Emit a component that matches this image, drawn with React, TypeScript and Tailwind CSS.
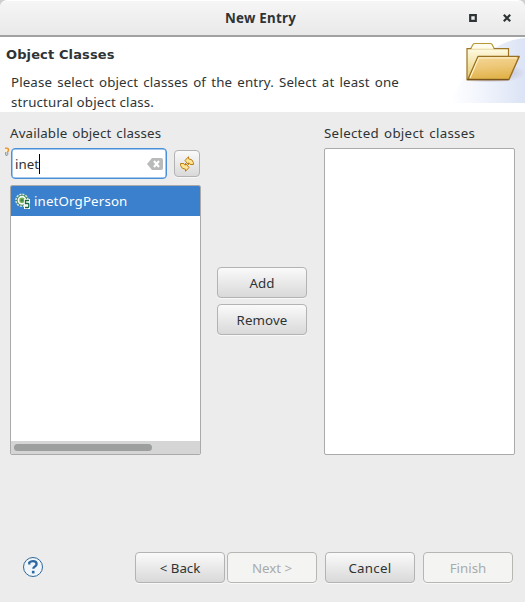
import type { ReactNode } from "react";

function Button({ children, disabled = false }: { children: ReactNode; disabled?: boolean }) {
  return (
    <button
      disabled={disabled}
      className={
        disabled
          ? "h-[31px] w-[90px] rounded-[4px] border border-[#b6b6b3] bg-[#f4f4f2] shadow-[0_1px_#f8f8f8] text-[#a8abac]"
          : "h-[31px] w-[90px] rounded-[4px] border border-[#b3b3b3] bg-linear-to-b from-[#fafafa] to-[#d9d9d9] shadow-[0_1px_#f8f8f8] text-[#2e3436]"
      }
    >
      {children}
    </button>
  );
}

function TitleBar() {
  return (
    <div className="bg-[#cfcfcf]">
      <header className="flex h-[37px] items-center rounded-t-[7px] border-b-2 border-t border-b-[#a1a1a1] border-t-white bg-linear-to-b from-[#f6f6f6] to-[#e9e9e9] font-bold">
        <div className="w-[225px]" />
        <h1 className="w-[244px] tracking-[0.26px]">New Entry</h1>
        <svg width="44" height="12" viewBox="0 0 44 12" fill="none">
          <path d="M1.2 3.2h5.6v5.6H1.2z" stroke="#2e3436" strokeWidth="2.2" />
          <path d="m34.8 2.8 6.4 6.4m0-6.4-6.4 6.4" stroke="#2e3436" strokeWidth="2.2" />
        </svg>
      </header>
    </div>
  );
}

function FolderBanner() {
  return (
    <svg width="75" height="66" viewBox="0 0 75 66">
      <defs>
        <linearGradient id="sky" x1="0" x2="1">
          <stop stopColor="#fff" />
          <stop offset=".4" stopColor="#f2f5fc" />
          <stop offset="1" stopColor="#dbe3f5" />
        </linearGradient>
        <linearGradient id="back" x2="0" y2="1">
          <stop stopColor="#fffbe2" />
          <stop offset="1" stopColor="#e6ca6d" />
        </linearGradient>
        <linearGradient id="front" x2=".2" y2="1">
          <stop stopColor="#f5d797" />
          <stop offset=".5" stopColor="#eec879" />
          <stop offset="1" stopColor="#e1b34b" />
        </linearGradient>
        <radialGradient id="shade">
          <stop stopColor="#a9a0bb" stopOpacity=".65" />
          <stop offset="1" stopColor="#a9a0bb" stopOpacity="0" />
        </radialGradient>
      </defs>
      <path d="M0 66C8 50 18 28 40 14 52 6 63 2 75 1v65Z" fill="url(#sky)" />
      <ellipse cx="53" cy="36" rx="22" ry="9" fill="url(#shade)" />
      <ellipse cx="38" cy="43" rx="24" ry="2.5" fill="url(#shade)" />
      <path d="m20.5 12 2.3-4.3q.7-1.2 2-1.2h15.4q1.2 0 2 1.2l2.3 4.3" fill="#fffdf0" stroke="#b69837" strokeWidth="1.2" />
      <path d="M17 11.6h41.5v31H17z" fill="url(#back)" stroke="#9d7624" strokeWidth="1.2" />
      <path d="M21.5 11.6h22" stroke="#fbf3cd" strokeWidth="1.4" />
      <path d="M28 19.5h41.2L59 42.4H18z" fill="url(#front)" stroke="#997022" strokeWidth="1.4" strokeLinejoin="round" />
      <path d="m20 41 8.8-20.2h38" fill="none" stroke="#fff2c8" strokeWidth="1.2" />
      <path d="M17 42.6h41.5" stroke="#79551d" strokeWidth="1.3" />
    </svg>
  );
}

function Intro() {
  return (
    <section className="flex h-[75px] bg-white">
      <div className="w-[450px] shrink-0 pl-[6px] pt-[8px]">
        <h2 className="font-['DejaVu_Sans',sans-serif] text-[13px] leading-[20px] font-bold tracking-[0.12px]">Object Classes</h2>
        <p className="mt-[7px] ml-[5px] leading-[20px] tracking-[0.12px] whitespace-nowrap">
          <span className="[word-spacing:1.6px]">Please select object classes of the entry. Select at least one</span>
          <br />
          <span className="tracking-[0.16px]">structural object class.</span>
        </p>
      </div>
      <FolderBanner />
    </section>
  );
}

function HintBulb() {
  return (
    <svg className="mt-[-1px] mr-[1px] ml-[5px] shrink-0" width="5" height="10" viewBox="0 0 5 10">
      <path d="M0 1.2Q3.7.7 3.4 3.2 3.1 4.8 2 6" fill="#fff0bd" stroke="#eb8e2d" strokeWidth="1.4" />
      <path d="M.4 5v2.3L1.5 9l1.3-1.6V5.8" fill="#c3ccd7" stroke="#8792a2" strokeWidth=".9" />
    </svg>
  );
}

function SearchRow() {
  return (
    <div className="-ml-[10px] flex h-[31px]">
      <HintBulb />
      <div className="mr-[7px] flex h-[31px] w-[156px] items-center rounded-[4px] border border-[#4a90d9] bg-white pl-[3px] shadow-[inset_0_0_0_0.5px_#4a90d9]">
        <span className="tracking-normal">inet</span>
        <span className="h-[20px] w-px bg-black" />
        <svg className="mr-[3px] ml-auto" width="16" height="12" viewBox="0 0 16 12">
          <path d="M0 6 5 0h9q2 0 2 2v8q0 2-2 2H5Z" fill="#b9bbbb" />
          <path d="m7 3 5 6m0-6L7 9" stroke="#fff" strokeWidth="2" />
        </svg>
      </div>
      <button className="mt-[2px] flex h-[27px] w-[26px] items-center justify-center rounded-[4px] border border-[#b3b3b3] bg-linear-to-b from-[#fafafa] to-[#d9d9d9] shadow-[0_1px_#f8f8f8]">
        <svg width="16" height="16" viewBox="0 0 16 16">
          <path d="m6 4.5 3.5-3.8v2.1q4 .1 4.9 3.7v2h-3.2q-.3-1.6-1.7-1.6v1.9Z" fill="#ffe694" stroke="#bd7b11" strokeLinejoin="round" />
          <path d="m10 11.5-3.5 3.8v-2.1q-4-.1-4.9-3.7v-2h3.2q.3 1.6 1.7 1.6V7.2Z" fill="#ffe694" stroke="#bd7b11" strokeLinejoin="round" />
        </svg>
      </button>
    </div>
  );
}

function ClassIcon() {
  return (
    <svg width="17" height="17" viewBox="0 0 17 17">
      <circle cx="7" cy="7.3" r="6" fill="#3c8757" stroke="#d4e6dc" strokeWidth="1.5" strokeDasharray="2.1 1" />
      <circle cx="7" cy="7.3" r="3.6" fill="#75ad4e" stroke="#f4faf4" strokeWidth="1.7" />
      <circle cx="7" cy="7.3" r="1.3" fill="#3f8850" />
      <path d="M9 6h6v10H9z" fill="#fff" />
      <path d="M14 7.5h-3.5v3H13q.8 0 .8.8v2q0 1.2-1 1.2H10" fill="none" stroke="#176b3d" strokeWidth="1.3" />
    </svg>
  );
}

function AvailableClasses() {
  return (
    <section className="w-[191px]">
      <label className="block h-[36px] pt-[11px] leading-[20px] tracking-[0.14px]">Available object classes</label>
      <SearchRow />
      <div className="mt-[6px] flex h-[270px] flex-col overflow-hidden rounded-[2px] border border-[#aaaaa8] bg-white">
        <div className="flex h-[30px] items-center bg-[#3a80cc] pl-[4px] text-white">
          <ClassIcon />
          <span className="ml-[2px] tracking-[0.15px]">inetOrgPerson</span>
        </div>
        <div className="mt-auto h-[13px] bg-[#d5d5d5] pt-[3px] pl-[3px]">
          <div className="h-[7px] w-[138px] rounded-full bg-[#9d9e9e]" />
        </div>
      </div>
    </section>
  );
}

function HelpIcon() {
  return (
    <svg width="22" height="22" viewBox="0 0 22 22" fill="none">
      <circle cx="11" cy="11" r="9.5" fill="#f0f5f9" stroke="#2f689b" />
      <path d="M7.3 8.4V6.5q1.5-1.4 3.7-1.4 3.6 0 3.6 2.9 0 1.5-1.7 2.4-1.6.9-1.6 2.4" stroke="#2b67a0" strokeWidth="2.3" />
      <path d="M11.2 14.8v2.6" stroke="#2b67a0" strokeWidth="2.6" />
    </svg>
  );
}

export default function App() {
  return (
    <main className="flex h-[602px] w-[525px] flex-col overflow-hidden bg-[#ececec] font-['Noto_Sans','Open_Sans',sans-serif] text-[13.3px] leading-[20px] text-[#2e3436]">
      <TitleBar />
      <Intro />
      <div className="flex h-[343px] px-[10px] tracking-[0.1px] [word-spacing:1.3px]">
        <AvailableClasses />
        <div className="mx-[16px] flex w-[91px] flex-col gap-[6px] pt-[155px]">
          <Button>Add</Button>
          <Button>Remove</Button>
        </div>
        <section className="w-[191px]">
          <label className="block h-[36px] pt-[11px] leading-[20px] tracking-[0.3px]">Selected object classes</label>
          <div className="h-[307px] rounded-[2px] border border-[#aaaaa8] bg-white" />
        </section>
      </div>
      <footer className="mt-auto flex h-[50px] pr-[12px] pl-[22px]">
        <div className="mt-[4px] mr-[91px]"><HelpIcon /></div>
        <div className="flex">
          <Button>&lt; Back</Button>
          <div className="mr-[8px] ml-[2px]"><Button disabled>Next &gt;</Button></div>
          <Button><span className="tracking-[0.3px]">Cancel</span></Button>
          <div className="ml-[8px]"><Button disabled>Finish</Button></div>
        </div>
      </footer>
    </main>
  );
}
